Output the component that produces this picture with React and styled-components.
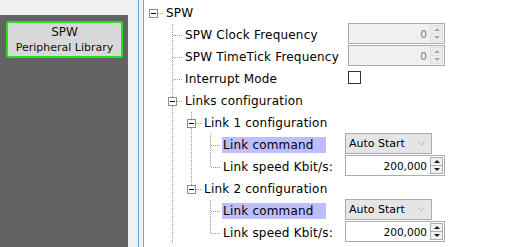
import React from 'react'
import styled, { createGlobalStyle } from 'styled-components'
import { ChevronDown } from 'lucide-react'

const GlobalStyle = createGlobalStyle`
  html, body {
    margin: 0;
    padding: 0;
    background: #ffffff;
  }
  body {
    font-family: "DejaVu Sans", sans-serif;
  }
`;

const Page = styled.div`
  display: flex;
  width: 512px;
  height: 247px;
  overflow: hidden;
`;

const Sidebar = styled.div`
  width: 128px;
  background: #f0f0f0;
  padding-top: 15px;
  display: flex;
  flex-direction: column;
`;

const SidebarBody = styled.div`
  flex: 1;
  background: #636363;
  padding: 6px 5px 0 6px;
`;

const Card = styled.div`
  height: 33px;
  border: 2px solid #1ee41e;
  border-radius: 3px;
  background: #d8d8d8;
  display: flex;
  flex-direction: column;
  align-items: center;
  justify-content: center;
  gap: 3px;
  color: #111;
`;

const CardTitle = styled.div`
  font-size: 12px;
  line-height: 13px;
`;

const CardSub = styled.div`
  font-size: 11px;
  line-height: 12px;
`;

const Splitter = styled.div`
  width: 5px;
  padding-left: 10px;
  background: #f0f0f0;
  border-right: 1px solid #8c9fb8;
  display: flex;
`;

const SplitLine = styled.div`
  width: 1px;
  background: #6f9fd6;
`;

const Tree = styled.div`
  flex: 1;
  background: #ffffff;
  padding-top: 2px;
`;

const Row = styled.div`
  display: flex;
  height: 22px;
`;

const TreePart = styled.div`
  width: 201px;
  flex-shrink: 0;
  display: flex;
`;

const dotsV = 'repeating-linear-gradient(to bottom, #9a9a9a 0 1px, transparent 1px 2px)';
const dotsH = 'repeating-linear-gradient(to right, #9a9a9a 0 1px, transparent 1px 2px)';

const Guide = styled.div`
  width: 19px;
  flex-shrink: 0;
  background: ${p => (p.$line ? `${dotsV} 9px 0 / 1px 100% no-repeat` : 'none')};
`;

const vertical = (kind) => {
  if (kind === 'full') return `${dotsV} 9px 0 / 1px 100% no-repeat`;
  if (kind === 'half') return `${dotsV} 9px 0 / 1px 12px no-repeat`;
  return null;
};

const Connector = styled.div`
  width: 19px;
  flex-shrink: 0;
  display: flex;
  align-items: center;
  padding-left: 5px;
  box-sizing: border-box;
  background: ${p => [`${dotsH} 10px 11px / 9px 1px no-repeat`, vertical(p.$vert)].filter(Boolean).join(', ')};
`;

const Expander = styled.div`
  width: 9px;
  height: 9px;
  box-sizing: border-box;
  border: 1px solid #8e8e8e;
  background: #ffffff;
  display: flex;
  align-items: center;
  justify-content: center;
  margin-top: 1px;

  &::after {
    content: '';
    width: 5px;
    height: 1px;
    background: #000;
  }
`;

const Label = styled.div`
  flex: 1;
  margin: 0 19px 0 2px;
  padding-left: 1px;
  align-self: center;
  height: 16px;
  line-height: 16px;
  font-size: 12px;
  letter-spacing: 0.2px;
  color: #000;
  white-space: nowrap;
  background: ${p => (p.$selected ? '#bebeff' : 'transparent')};
`;

const Value = styled.div`
  flex: 1;
  display: flex;
  align-items: flex-start;
  font-size: 10.5px;
`;

const SpinBox = styled.div`
  width: ${p => p.$width}px;
  height: 21px;
  margin: -1px 0 0 ${p => p.$indent || 0}px;
  box-sizing: border-box;
  border: 1px solid #acacac;
  background: ${p => (p.$disabled ? '#f0f0f0' : '#ffffff')};
  display: flex;
  align-items: center;
`;

const SpinText = styled.div`
  flex: 1;
  text-align: right;
  padding-right: 3px;
  color: ${p => (p.$disabled ? '#7a7a7a' : '#000')};
`;

const SpinButtons = styled.div`
  width: 13px;
  height: 17px;
  margin-right: 1px;
  display: grid;
  grid-template-rows: 1fr 1fr;
  gap: 1px;
  background: ${p => (p.$disabled ? '#dedede' : '#adadad')};
  border: 1px solid ${p => (p.$disabled ? '#dedede' : '#adadad')};
  box-sizing: border-box;
`;

const SpinHalf = styled.div`
  background: ${p => (p.$disabled ? '#ececec' : '#f0f0f0')};
  display: flex;
  align-items: center;
  justify-content: center;

  &::after {
    content: '';
    border-left: 3px solid transparent;
    border-right: 3px solid transparent;
    ${p => (p.$down ? 'border-top' : 'border-bottom')}: 3px solid ${p => (p.$disabled ? '#a8a8a8' : '#1a1a1a')};
  }
`;

const Dropdown = styled.div`
  width: 87px;
  height: 21px;
  margin-top: -1px;
  box-sizing: border-box;
  border: 1px solid #acacac;
  background: #e5e5e5;
  display: flex;
  align-items: center;
  justify-content: space-between;
  padding: 0 4px 0 3px;
  font-size: 11px;
  color: #000;
`;

const CheckBox = styled.div`
  width: 13px;
  height: 13px;
  box-sizing: border-box;
  margin: 3px 0 0 3px;
  border: 1px solid #333333;
  background: #ffffff;
`;

const Spinner = ({ value, width, indent, disabled }) => (
  <SpinBox $width={width} $indent={indent} $disabled={disabled}>
    <SpinText $disabled={disabled}>{value}</SpinText>
    <SpinButtons $disabled={disabled}>
      <SpinHalf $disabled={disabled} />
      <SpinHalf $disabled={disabled} $down />
    </SpinButtons>
  </SpinBox>
);

const rows = [
  { guides: [], vert: 'none', box: true, label: 'SPW' },
  { guides: [false], vert: 'full', label: 'SPW Clock Frequency', control: 'spinOff' },
  { guides: [false], vert: 'full', label: 'SPW TimeTick Frequency', control: 'spinOff' },
  { guides: [false], vert: 'full', label: 'Interrupt Mode', control: 'check' },
  { guides: [false], vert: 'full', box: true, label: 'Links configuration' },
  { guides: [false, true], vert: 'full', box: true, label: 'Link 1 configuration' },
  { guides: [false, true, true], vert: 'full', label: 'Link command', selected: true, control: 'drop' },
  { guides: [false, true, true], vert: 'half', label: 'Link speed Kbit/s:', control: 'spin' },
  { guides: [false, true], vert: 'half', box: true, label: 'Link 2 configuration' },
  { guides: [false, true, false], vert: 'full', label: 'Link command', selected: true, control: 'drop' },
  { guides: [false, true, false], vert: 'half', label: 'Link speed Kbit/s:', control: 'spin' },
];

const renderControl = (control) => {
  if (control === 'spinOff') return <Spinner value="0" width={97} indent={3} disabled />;
  if (control === 'spin') return <Spinner value="200,000" width={100} />;
  if (control === 'check') return <CheckBox />;
  if (control === 'drop')
    return (
      <Dropdown>
        <span>Auto Start</span>
        <ChevronDown size={11} strokeWidth={1} color="#7a7a7a" />
      </Dropdown>
    );
  return null;
};

const App = () => {
  return (
    <Page>
      <GlobalStyle />
      <Sidebar>
        <SidebarBody>
          <Card>
            <CardTitle>SPW</CardTitle>
            <CardSub>Peripheral Library</CardSub>
          </Card>
        </SidebarBody>
      </Sidebar>
      <Splitter>
        <SplitLine />
      </Splitter>
      <Tree>
        {rows.map((r, i) => (
          <Row key={i}>
            <TreePart>
              {r.guides.map((g, j) => (
                <Guide key={j} $line={g} />
              ))}
              <Connector $vert={r.vert}>{r.box && <Expander />}</Connector>
              <Label $selected={r.selected}>{r.label}</Label>
            </TreePart>
            <Value>{renderControl(r.control)}</Value>
          </Row>
        ))}
      </Tree>
    </Page>
  )
}

export default App
